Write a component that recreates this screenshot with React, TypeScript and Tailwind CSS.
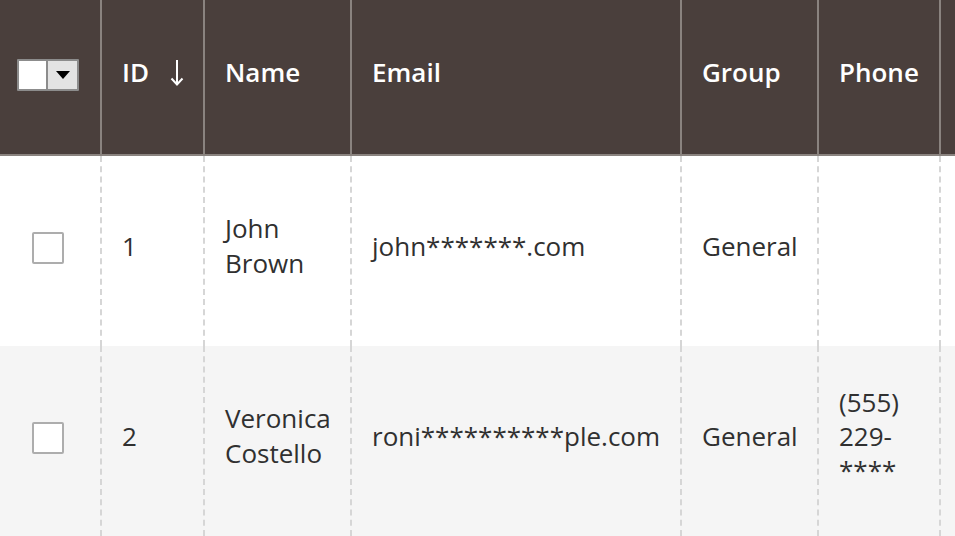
import React from "react";

const font = { fontFamily: '"Open Sans", "Liberation Sans", sans-serif' };

function HeadCell({ children, last }: { children?: React.ReactNode; last?: boolean }) {
  return (
    <div
      className={
        "flex items-center pl-[20px] pb-[10px] text-white font-semibold text-[26px] leading-[35px] " +
        (last ? "" : "border-r-2 border-[#8a837f]")
      }
    >
      {children}
    </div>
  );
}

function BodyCell({ children, last, center }: { children?: React.ReactNode; last?: boolean; center?: boolean }) {
  return (
    <div
      className={
        "flex items-center text-[#303030] text-[26px] leading-[35px] " +
        (center ? "justify-center pr-[4px] pb-[6px] " : "pl-[20px] pr-[8px] pb-[10px] ") +
        (last ? "" : "border-r-2 border-dashed border-[#d6d6d6]")
      }
    >
      {children}
    </div>
  );
}

function Checkbox() {
  return <div className="w-[32px] h-[32px] border-2 border-[#adadad] rounded-[2px] bg-white" />;
}

const cols = "grid grid-cols-[102px_103px_147px_330px_137px_122px_1fr]";

const rows = [
  { id: "1", name: ["John", "Brown"], email: "john*******.com", group: "General", phone: [] as string[], bg: "bg-white" },
  {
    id: "2",
    name: ["Veronica", "Costello"],
    email: "roni**********ple.com",
    group: "General",
    phone: ["(555)", "229-", "****"],
    bg: "bg-[#f5f5f5]",
  },
];

export default function App() {
  return (
    <div style={font} className="w-[955px] h-[536px] overflow-hidden bg-white">
      <div className={cols + " h-[156px] bg-[#4a3f3c] border-b-2 border-[#8a837f]"}>
        <div className="flex items-center justify-center pb-[4px] pr-[4px] border-r-2 border-[#8a837f]">
          <div className="flex h-[32px] w-[62px] border-2 border-[#8c8c8c] rounded-[1px]">
            <div className="w-[29px] h-full bg-white border-r-2 border-[#8c8c8c]" />
            <div className="flex-1 h-full bg-[#e3e3e3] flex items-center justify-center">
              <svg width="16" height="10" viewBox="0 0 16 10">
                <polygon points="1,1 15,1 8,9" fill="#000" />
              </svg>
            </div>
          </div>
        </div>
        <HeadCell>
          <span>ID</span>
          <svg className="ml-[21px] mt-[2px]" width="14" height="28" viewBox="0 0 14 28">
            <line x1="7" y1="1" x2="7" y2="25" stroke="#fff" strokeWidth="2" />
            <polyline points="1.5,19.5 7,25.5 12.5,19.5" fill="none" stroke="#fff" strokeWidth="2" />
          </svg>
        </HeadCell>
        <HeadCell>Name</HeadCell>
        <HeadCell>Email</HeadCell>
        <HeadCell>Group</HeadCell>
        <HeadCell>Phone</HeadCell>
        <HeadCell last />
      </div>
      {rows.map((r) => (
        <div key={r.id} className={cols + " h-[190px] " + r.bg}>
          <BodyCell center>
            <Checkbox />
          </BodyCell>
          <BodyCell>{r.id}</BodyCell>
          <BodyCell>
            <div>
              {r.name.map((n) => (
                <div key={n}>{n}</div>
              ))}
            </div>
          </BodyCell>
          <BodyCell>{r.email}</BodyCell>
          <BodyCell>{r.group}</BodyCell>
          <BodyCell>
            <div className="leading-[34px]">
              {r.phone.map((n) => (
                <div key={n}>{n}</div>
              ))}
            </div>
          </BodyCell>
          <BodyCell last />
        </div>
      ))}
    </div>
  );
}
